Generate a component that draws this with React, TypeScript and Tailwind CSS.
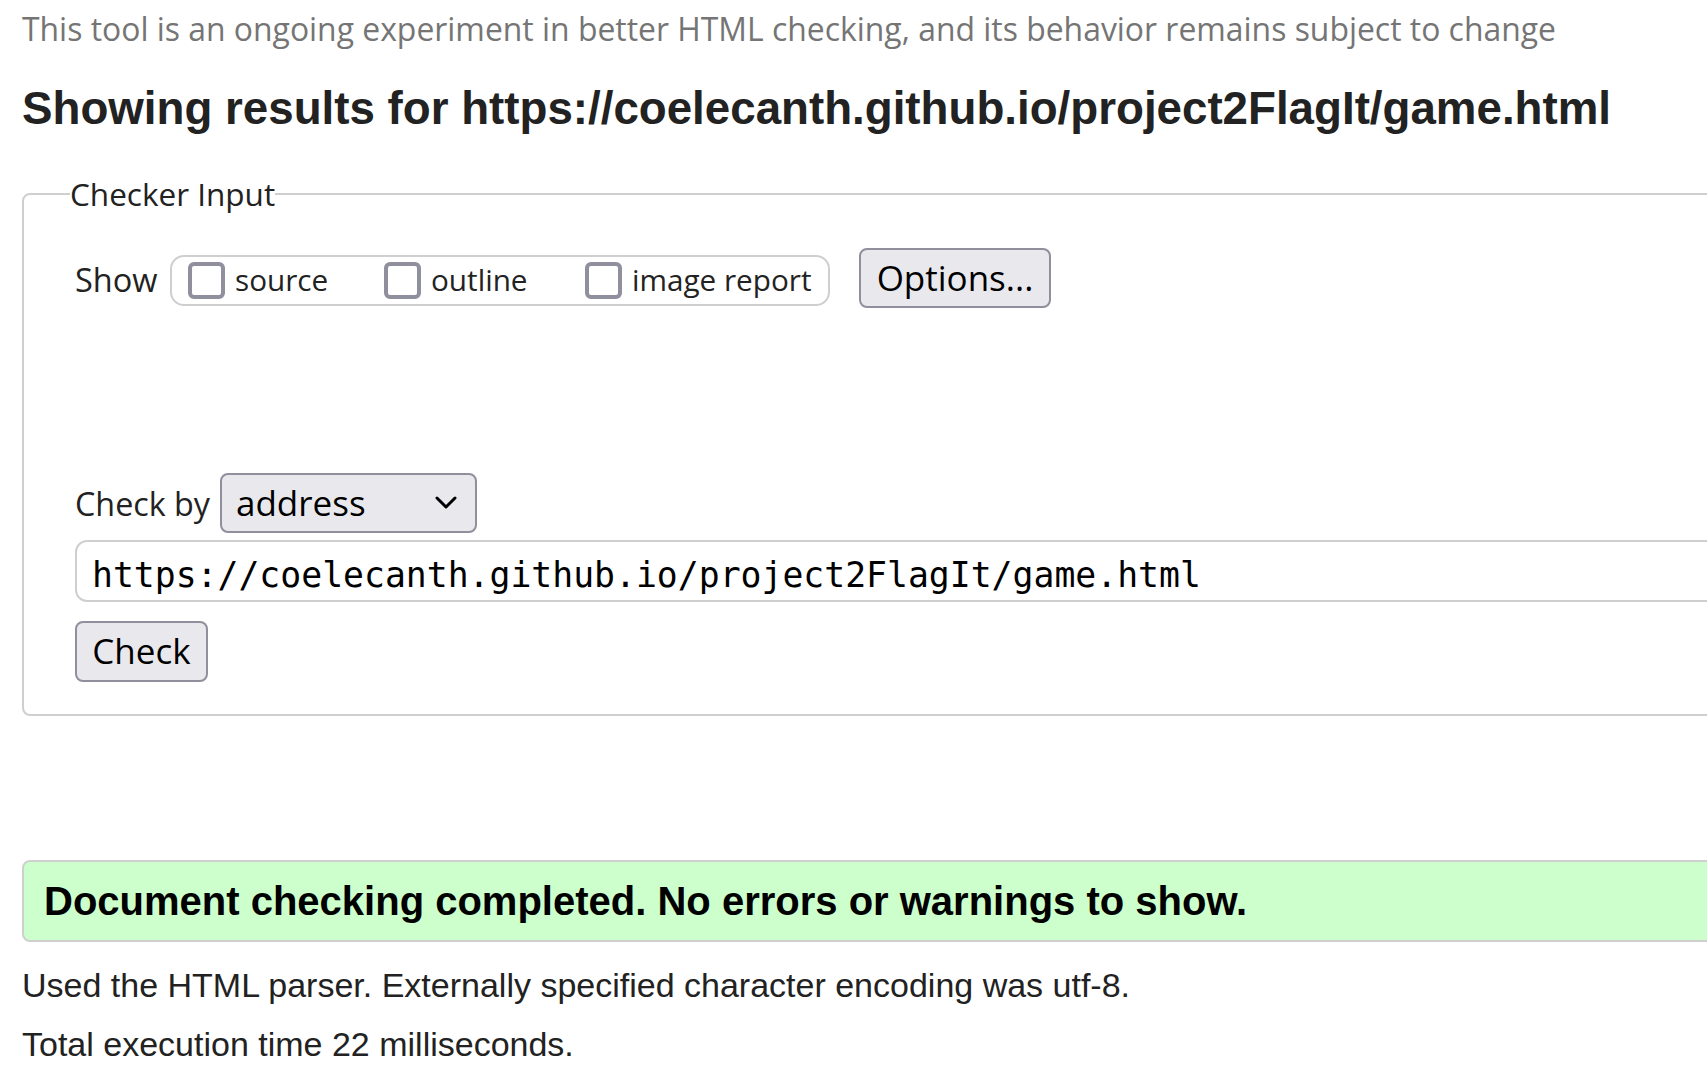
import type { ReactNode } from 'react'

// checkbox drawn as a plain rounded square, like the unchecked Firefox control
function CheckBox({ label, width }: { label: string; width?: string }) {
  return (
    <label className={`flex items-center gap-[10px] ${width ?? ''}`}>
      <span className="block h-[37px] w-[37px] shrink-0 rounded-[6px] border-[4px] border-[#8f8f9d] bg-white"></span>
      <span className="text-[29.7px] leading-[44px]">{label}</span>
    </label>
  )
}

function GrayButton({ children, className }: { children: ReactNode; className: string }) {
  return (
    <button
      type="button"
      className={`flex items-center justify-center rounded-[8px] border-2 border-[#8f8f9d] bg-[#e9e9ed] text-[35px] text-black ${className}`}
    >
      {children}
    </button>
  )
}

export default function App() {
  return (
    <div className="min-h-screen w-full overflow-hidden bg-white">
      <div className="w-[1780px] pl-[22px] pt-[7px] text-[#222222]">
        <p className="font-['Open_Sans',sans-serif] text-[31.9px] leading-[44px] text-[#757575]">
          This tool is an ongoing experiment in better HTML checking, and its behavior remains subject to change
        </p>

        <h2 className="mt-[32px] font-['Liberation_Sans',Arial,sans-serif] text-[45.7px] font-bold leading-[52px]">
          Showing results for https://coelecanth.github.io/project2FlagIt/game.html
        </h2>

        <fieldset className="mt-[37px] rounded-[8px] border-2 border-[#cfcfcf] pb-[32px] pl-[51px] font-['Open_Sans',sans-serif]">
          <legend className="ml-[-5px] text-[31.5px] leading-[44px]">Checker Input</legend>

          <div className="mt-[34px] flex h-[60px] items-center">
            <span className="w-[95px] text-[32.5px] leading-[44px]">Show</span>
            <div className="flex h-[51px] w-[660px] items-center rounded-[14px] border-2 border-[#cfcfcf] pl-[16px]">
              <CheckBox label="source" width="w-[196px]" />
              <CheckBox label="outline" width="w-[201px]" />
              <CheckBox label="image report" />
            </div>
            <GrayButton className="mb-[4px] ml-[29px] h-[60px] w-[192px]">Options...</GrayButton>
          </div>

          <div className="mt-[163px] flex items-center">
            <span className="w-[145px] text-[32.3px] leading-[44px]">Check by</span>
            <div className="flex h-[60px] w-[257px] items-center justify-between rounded-[8px] border-2 border-[#8f8f9d] bg-[#e9e9ed] pl-[14px] pr-[18px] text-[35px] text-black">
              <span>address</span>
              <svg width="22" height="14" viewBox="0 0 22 14" fill="none">
                <path d="M2 2 L11 11 L20 2" stroke="#000" strokeWidth="3" strokeLinecap="round" strokeLinejoin="round" />
              </svg>
            </div>
          </div>

          <input
            readOnly
            value="https://coelecanth.github.io/project2FlagIt/game.html"
            className="mt-[7px] block h-[62px] w-full rounded-[12px] border-2 border-[#cfcfcf] bg-white pl-[15px] pt-[8px] font-['DejaVu_Sans_Mono',monospace] text-[34.75px] text-black outline-none"
          />

          <GrayButton className="mt-[19px] h-[61px] w-[133px]">Check</GrayButton>
        </fieldset>

        <div className="mt-[144px] flex h-[82px] items-center rounded-l-[8px] border-2 border-[#cfcfcf] bg-[#ccffcc] pl-[20px] font-['Liberation_Sans',Arial,sans-serif] text-[40px] font-bold text-black">
          Document checking completed. No errors or warnings to show.
        </div>

        <p className="mt-[21px] font-['Liberation_Sans',Arial,sans-serif] text-[34px] leading-[44px]">
          Used the HTML parser. Externally specified character encoding was utf-8.
        </p>
        <p className="mt-[15px] font-['Liberation_Sans',Arial,sans-serif] text-[34px] leading-[44px]">
          Total execution time 22 milliseconds.
        </p>
      </div>
    </div>
  )
}
